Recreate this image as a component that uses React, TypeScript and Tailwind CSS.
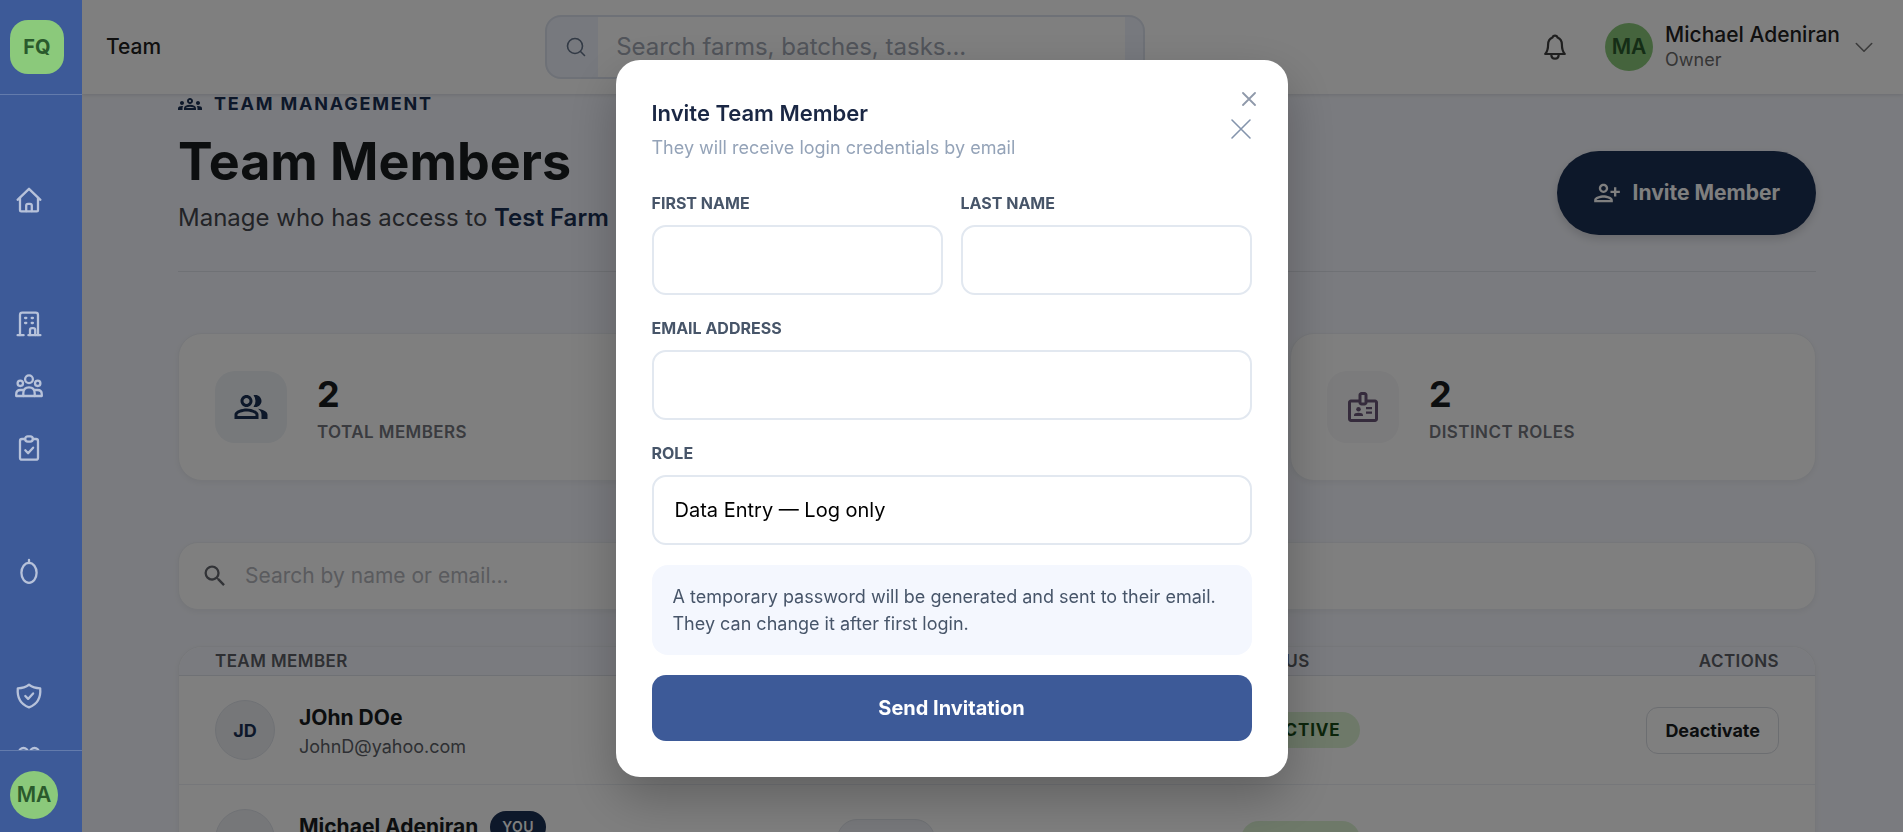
import type { ReactNode } from "react";
import {
  MdOutlineBadge,
  MdOutlineGroups,
  MdOutlinePeopleAlt,
  MdOutlinePersonAddAlt1,
  MdOutlineVerifiedUser,
  MdSearch,
} from "react-icons/md";

function NavIcon({ children }: { children: ReactNode }) {
  return (
    <svg
      viewBox="0 0 28 28"
      className="h-7 w-7"
      fill="none"
      stroke="currentColor"
      strokeWidth="2.3"
      strokeLinecap="round"
      strokeLinejoin="round"
      aria-hidden="true"
    >
      {children}
    </svg>
  );
}

const navItems: { label: string; icon: ReactNode; spaced?: boolean }[] = [
  {
    label: "Dashboard",
    icon: (
      <>
        <path d="M2.6 13.8 14 2.8l11.4 11" />
        <path d="M5 11.8v12.4c0 .7.4 1.1 1.1 1.1h15.8c.7 0 1.1-.4 1.1-1.1V11.8" />
        <path d="M11.2 25.2v-5.6c0-1.1.7-1.8 1.8-1.8h2c1.1 0 1.8.7 1.8 1.8v5.6" />
      </>
    ),
  },
  {
    label: "Farms",
    spaced: true,
    icon: (
      <>
        <path d="M5 25V5c0-1.5.8-2.3 2.3-2.3h13.4c1.5 0 2.3.8 2.3 2.3v20" />
        <path d="M2.6 25.2h6M13.4 25.2h12" />
        <path d="M15 25v-5c0-1.2.7-1.9 1.9-1.9h1.4c1.2 0 1.9.7 1.9 1.9v5" />
        <path d="M10.1 8h1.2M16.7 8h1.2M10.1 13h1.2M16.7 13h1.2" />
      </>
    ),
  },
  {
    label: "Team",
    icon: (
      <>
        <circle cx="14" cy="7.3" r="3.9" />
        <circle cx="5.3" cy="11.3" r="2.7" />
        <circle cx="22.7" cy="11.3" r="2.7" />
        <path d="M8.3 24v-2.8c0-3.6 2.2-5.9 5.7-5.9s5.7 2.3 5.7 5.9V24" />
        <path d="M7.8 18H5.5c-2.7 0-4.3 1.8-4.3 4.4V24h25.6v-1.6c0-2.6-1.6-4.4-4.3-4.4h-2.3" />
      </>
    ),
  },
  {
    label: "Tasks",
    icon: (
      <>
        <path d="M10 5H7C5.7 5 5 5.7 5 7v16.7c0 1.3.7 2 2 2h14c1.3 0 2-.7 2-2V7c0-1.3-.7-2-2-2h-3" />
        <rect x="10.2" y="2.3" width="7.6" height="5.4" rx="2.6" />
        <path d="m10.3 16.3 2.8 2.9 5-5.5" />
      </>
    ),
  },
  {
    label: "Batches",
    spaced: true,
    icon: (
      <>
        <ellipse cx="14" cy="14.8" rx="7.6" ry="10" />
        <path d="M14 2v3" />
      </>
    ),
  },
  {
    label: "Compliance",
    spaced: true,
    icon: (
      <>
        <path d="M14 2.8c-3.4 2.5-7 3.4-11.2 3.5C2 15.6 5.2 22 14 25.4 22.8 22 26 15.6 25.2 6.3 21 6.2 17.4 5.3 14 2.8Z" />
        <path d="m10.3 14 2.8 2.9 5-5.5" />
      </>
    ),
  },
  {
    label: "Modules",
    icon: (
      <>
        <circle cx="8.5" cy="8.5" r="4.5" />
        <circle cx="19.5" cy="8.5" r="4.5" />
        <path d="M4 24v-3c0-2 1.5-3.5 3.5-3.5h13c2 0 3.5 1.5 3.5 3.5v3" />
      </>
    ),
  },
];

function Sidebar() {
  return (
    <aside className="relative z-20 flex w-[82px] shrink-0 flex-col bg-[#3d5a98]">
      <div className="shrink-0 border-b border-white/20 px-2.5 py-5">
        <a
          href="#home"
          className="flex h-[54px] w-[54px] items-center justify-center rounded-[18px] bg-[#8bc97b] text-[20px] font-bold text-[#2a5a2c]"
        >
          FQ
        </a>
      </div>
      <nav className="min-h-0 flex-1 overflow-hidden pt-[74px]" aria-label="Main">
        {navItems.map((item) => (
          <a
            key={item.label}
            href={"#" + item.label.toLowerCase()}
            aria-label={item.label}
            className={
              item.spaced
                ? "mt-[62px] flex h-[62px] items-center pl-[15px] text-[#b7c2da]"
                : "flex h-[62px] items-center pl-[15px] text-[#b7c2da]"
            }
          >
            <NavIcon>{item.icon}</NavIcon>
          </a>
        ))}
      </nav>
      <div className="shrink-0 border-t border-white/20 px-2.5 pt-5 pb-[13px]">
        <div className="flex h-12 w-12 items-center justify-center rounded-full bg-[#8bc97b] text-[21px] font-semibold text-[#2a5a2c]">
          MA
        </div>
      </div>
    </aside>
  );
}

function Header() {
  return (
    <header className="relative z-[1] flex h-[94px] shrink-0 items-center justify-between bg-white pr-[29px] pl-6 shadow-[0_1px_4px_rgba(0,0,0,0.12)]">
      <p className="text-[21px] leading-[30px] font-medium text-[#212121]">Team</p>
      <label className="flex h-16 w-[600px] overflow-hidden rounded-2xl border-2 border-[#dde3ee] bg-[#eef2fc]">
        <span className="flex w-[51px] items-center justify-center pl-1.5 text-[#64748b]">
          <svg viewBox="0 0 20 20" className="h-5 w-5" fill="none" stroke="currentColor" strokeWidth="1.6" strokeLinecap="round" aria-hidden="true">
            <circle cx="9" cy="9" r="7.5" />
            <path d="m14.5 14.5 4 4" />
          </svg>
        </span>
        <input
          type="search"
          aria-label="Search"
          placeholder="Search farms, batches, tasks..."
          className="min-w-0 flex-1 bg-white px-[18px] text-[24px] outline-none placeholder:text-[#a3a9b5]"
        />
        <span className="w-[18px]" />
      </label>
      <div className="flex items-center">
        <button type="button" aria-label="Notifications" className="mr-6 flex h-[52px] w-[52px] items-center justify-center text-[#3f3f3f]">
          <svg viewBox="0 0 26 28" className="h-7 w-[26px]" fill="none" stroke="currentColor" strokeWidth="2.2" strokeLinecap="round" strokeLinejoin="round" aria-hidden="true">
            <path d="M13 2.6c1.3 0 2.2.7 2.5 1.9 3 1.2 4.4 3.6 4.4 7 0 4.3.6 6.9 2.9 9.5H3.2c2.3-2.6 2.9-5.2 2.9-9.5 0-3.4 1.4-5.8 4.4-7 .3-1.2 1.2-1.9 2.5-1.9Z" />
            <path d="M9.3 21.5c0 2.6 1.4 4.2 3.7 4.2s3.7-1.6 3.7-4.2" />
          </svg>
        </button>
        <button type="button" className="flex items-center text-left">
          <span className="flex h-12 w-12 items-center justify-center rounded-full bg-[#8bc97b] text-[21px] font-semibold text-[#2a5a2c]">
            MA
          </span>
          <span className="ml-3 flex flex-col">
            <span className="text-[21px] leading-[26px] font-medium text-[#212121]">Michael Adeniran</span>
            <span className="text-[18px] leading-6 text-[#6b6b6b]">Owner</span>
          </span>
          <svg viewBox="0 0 20 20" className="ml-3.5 h-5 w-5" fill="none" stroke="#757575" strokeWidth="1.6" strokeLinecap="round" strokeLinejoin="round" aria-hidden="true">
            <path d="m2.3 6.5 7.7 7.7 7.7-7.7" />
          </svg>
        </button>
      </div>
    </header>
  );
}

function StatCard({ value, label, icon, tone }: { value: number; label: string; icon: ReactNode; tone: string }) {
  return (
    <div className="flex items-center gap-[30px] rounded-3xl border border-[#eceff4] bg-white px-9 py-[37px] shadow-[0_2px_6px_rgba(0,0,0,0.05)]">
      <span className={"flex h-[72px] w-[72px] items-center justify-center rounded-[20px] text-[36px] " + tone}>
        {icon}
      </span>
      <div className="pt-1">
        <p className="text-[36px] leading-[38px] font-bold text-[#191c1e]">{value}</p>
        <p className="mt-2 text-[17px] leading-[22px] font-semibold tracking-wide text-[#74777f] uppercase">{label}</p>
      </div>
    </div>
  );
}

const members = [
  { initials: "JD", name: "JOhn DOe", email: "JohnD@yahoo.com", role: "DATA ENTRY", you: false },
  { initials: "MA", name: "Michael Adeniran", email: "michael@yahoo.com", role: "OWNER", you: true },
];

function MembersTable() {
  return (
    <div className="mt-9 overflow-hidden rounded-3xl border border-[#eceff4] bg-white shadow-[0_2px_6px_rgba(0,0,0,0.05)]">
      <table className="w-full table-fixed border-collapse text-left">
        <thead>
          <tr className="border-b border-[#dfe2ea] bg-[#f5f7fe] text-[17px] leading-7 tracking-wide text-[#5c5f66]">
            <th className="w-[38%] px-9 font-semibold">TEAM MEMBER</th>
            <th className="w-[24.7%] px-9 font-semibold">ROLE</th>
            <th className="px-9 font-semibold">STATUS</th>
            <th className="px-9 text-right font-semibold">ACTIONS</th>
          </tr>
        </thead>
        <tbody>
          {members.map((m) => (
            <tr key={m.email} className="border-b border-[#eceff4]">
              <td className="px-9 py-6">
                <div className="flex items-center gap-6">
                  <span className="flex h-[60px] w-[60px] shrink-0 items-center justify-center rounded-full border border-[#dfe3ea] bg-[#eceef2] text-[18px] font-bold text-[#1b3054]">
                    {m.initials}
                  </span>
                  <div className="pt-0.5">
                    <p className="flex items-center gap-3 text-[21px] leading-8 font-bold text-[#191c1e]">
                      {m.name}
                      {m.you && (
                        <span className="rounded-full bg-[#1b3054] px-3 text-[14px] leading-8 font-semibold tracking-wide text-white">YOU</span>
                      )}
                    </p>
                    <p className="text-[18px] leading-[26px] text-[#5c5f66]">{m.email}</p>
                  </div>
                </div>
              </td>
              <td className="px-9">
                <span className="inline-block rounded-full border border-[#dfe3ea] bg-[#eef0f6] px-[18px] text-[16px] leading-[38px] font-semibold text-[#1b3054]">
                  {m.role}
                </span>
              </td>
              <td className="px-9">
                <span className="inline-flex items-center gap-1.5 rounded-full bg-[#dcf3d3] px-[19px] text-[17px] leading-9 font-bold tracking-wider text-[#184a16]">
                  <span className="h-1.5 w-1.5 rounded-full bg-[#3f8f35]" />
                  ACTIVE
                </span>
              </td>
              <td className="px-9 text-right">
                {m.you ? (
                  <span className="text-[#74777f]">—</span>
                ) : (
                  <button type="button" className="rounded-xl border border-[#d9dce3] px-[18px] py-2.5 text-[18px] leading-[25px] font-bold text-[#191c1e]">
                    Deactivate
                  </button>
                )}
              </td>
            </tr>
          ))}
        </tbody>
      </table>
    </div>
  );
}

const fieldClass =
  "mt-[9px] block w-full appearance-none rounded-[14px] border-2 border-[#e2e8f0] bg-white px-[21px] py-[18px] text-[20px] leading-[30px] text-black outline-none";
const labelClass = "block text-[16px] leading-[26px] font-bold text-[#475569]";

function InviteDialog() {
  return (
    <div className="fixed inset-0 z-10 flex items-start justify-center bg-black/50 pt-[60px]">
      <section
        role="dialog"
        aria-modal="true"
        aria-labelledby="invite-title"
        className="relative w-full max-w-[672px] rounded-[24px] bg-white p-9 shadow-[0_20px_50px_rgba(0,0,0,0.25)]"
      >
        <button type="button" aria-label="Dismiss" className="absolute top-8 right-8 text-[#8f99aa]">
          <svg viewBox="0 0 14 14" className="h-3.5 w-3.5" fill="none" stroke="currentColor" strokeWidth="1.8" strokeLinecap="round" aria-hidden="true">
            <path d="m1 1 12 12M13 1 1 13" />
          </svg>
        </button>
        <div className="flex items-center justify-between">
          <div>
            <h2 id="invite-title" className="text-[22px] leading-[34px] font-semibold text-[#1a2744]">
              Invite Team Member
            </h2>
            <p className="mt-1 text-[18px] leading-[27px] text-[#94a3b8]">They will receive login credentials by email</p>
          </div>
          <button type="button" aria-label="Close" className="text-[#8494ac]">
            <svg viewBox="0 0 22 22" className="h-[22px] w-[22px]" fill="none" stroke="currentColor" strokeWidth="1.6" strokeLinecap="round" aria-hidden="true">
              <path d="m2 2 18 18M20 2 2 20" />
            </svg>
          </button>
        </div>
        <form className="mt-[29px] flex flex-col gap-5">
          <div className="grid grid-cols-2 gap-[18px]">
            <div>
              <label htmlFor="first-name" className={labelClass}>FIRST NAME</label>
              <input id="first-name" type="text" className={fieldClass} />
            </div>
            <div>
              <label htmlFor="last-name" className={labelClass}>LAST NAME</label>
              <input id="last-name" type="text" className={fieldClass} />
            </div>
          </div>
          <div>
            <label htmlFor="email" className={labelClass}>EMAIL ADDRESS</label>
            <input id="email" type="email" className={fieldClass} />
          </div>
          <div>
            <label htmlFor="role" className={labelClass}>ROLE</label>
            <select id="role" className={fieldClass}>
              <option>Data Entry — Log only</option>
            </select>
          </div>
          <p className="rounded-2xl bg-[#f4f7fe] px-[21px] py-[18px] text-[18px] leading-[27px] text-[#475569]">
            A temporary password will be generated and sent to their email. They can change it after first login.
          </p>
          <button type="button" className="rounded-[14px] bg-[#3d5a98] py-[18px] text-[20px] leading-[30px] font-bold text-white">
            Send Invitation
          </button>
        </form>
      </section>
    </div>
  );
}

export default function App() {
  return (
    <div className="flex h-screen overflow-hidden bg-[#f5f7fe] font-['Inter',sans-serif]">
      <Sidebar />
      <div className="flex min-w-0 flex-1 flex-col">
        <Header />
        <main className="min-h-0 flex-1 overflow-hidden pr-[87px] pl-24">
          <div className="flex items-end justify-between border-b border-[#dfe2ea] pb-9">
            <div>
              <p className="flex h-5 items-center gap-3 text-[18px] leading-5 font-bold tracking-widest text-[#1b3054]">
                <MdOutlineGroups className="h-6 w-6" aria-hidden="true" />
                TEAM MANAGEMENT
              </p>
              <h1 className="mt-4 text-[52px] leading-[64px] font-bold text-[#191c1e]">Team Members</h1>
              <p className="mt-1.5 text-[24px] leading-[35px] text-[#44474e]">
                Manage who has access to <strong className="font-semibold text-[#1b3054]">Test Farm</strong>
              </p>
            </div>
            <button
              type="button"
              className="flex items-center gap-3 rounded-full bg-[#1b3054] px-9 py-[27px] text-[21px] leading-[30px] font-bold text-white shadow-[0_4px_10px_rgba(0,0,0,0.15)]"
            >
              <MdOutlinePersonAddAlt1 className="h-7 w-7" aria-hidden="true" />
              Invite Member
            </button>
          </div>

          <div className="mt-[61px] grid grid-cols-3 gap-[30px]">
            <StatCard value={2} label="Total Members" icon={<MdOutlinePeopleAlt />} tone="bg-[#eef2f6] text-[#1b3054]" />
            <StatCard value={2} label="Active" icon={<MdOutlineVerifiedUser />} tone="bg-[#e8f5e3] text-[#2a5a2c]" />
            <StatCard value={2} label="Distinct Roles" icon={<MdOutlineBadge />} tone="bg-[#f6f6f8] text-[#6b5778]" />
          </div>

          <label className="mt-[61px] flex items-center gap-4 rounded-[20px] border border-[#eceff4] bg-white px-[22px] py-[18px] shadow-[0_2px_6px_rgba(0,0,0,0.05)]">
            <MdSearch className="h-7 w-7 text-[#64676e]" aria-hidden="true" />
            <input
              type="search"
              aria-label="Search members"
              placeholder="Search by name or email..."
              className="min-w-0 flex-1 text-[21px] leading-[30px] outline-none placeholder:text-[#b4b6bc]"
            />
          </label>

          <MembersTable />
        </main>
      </div>
      <InviteDialog />
    </div>
  );
}
